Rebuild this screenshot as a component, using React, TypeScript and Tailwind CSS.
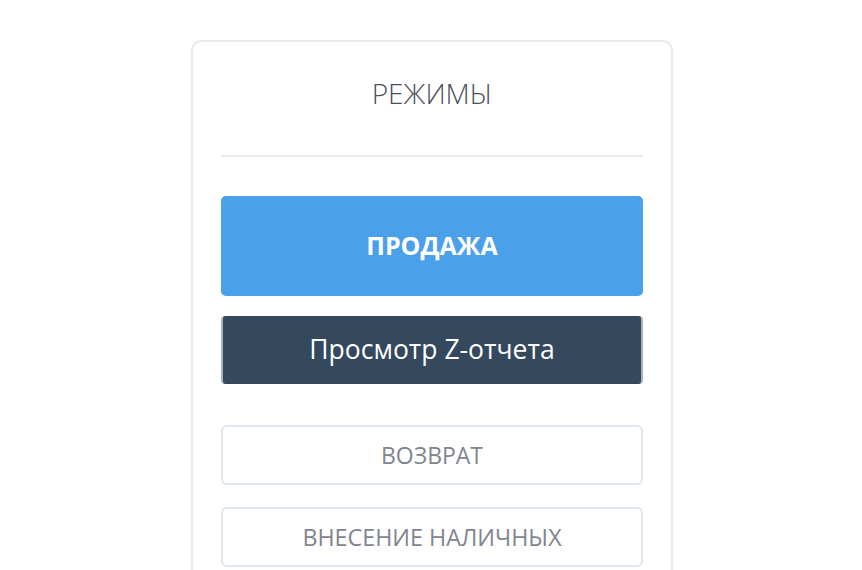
import React from "react";

export default function App() {
  return (
    <div
      className="min-h-[570px] w-full bg-white flex justify-center pl-[2px]"
      style={{ fontFamily: '"Open Sans", "Noto Sans", sans-serif' }}
    >
      <div className="mt-[40px] w-[482px] h-[560px] border-2 border-[#e6e9ed] rounded-[10px] px-[28px]">
        <div className="h-[113px] flex items-center justify-center pb-[12px]">
          <span className="text-[28px] font-light text-[#4a505c]">РЕЖИМЫ</span>
        </div>
        <div className="h-[2px] bg-[#e9ecef]" />
        <div className="mt-[39px] h-[100px] rounded-[5px] bg-[#4aa0e9] flex items-center justify-center">
          <span className="text-[25px] font-bold text-white">ПРОДАЖА</span>
        </div>
        <div className="mt-[20px] h-[68px] rounded-[4px] bg-[#34495e] border-l-2 border-r-2 border-[#aab3bd] flex items-center justify-center">
          <span className="text-[26.5px] text-white">Просмотр Z-отчета</span>
        </div>
        <div className="mt-[41px] h-[60px] rounded-[6px] border-2 border-[#dfe6ee] flex items-center justify-center">
          <span className="text-[23px] text-[#7f8591]">ВОЗВРАТ</span>
        </div>
        <div className="mt-[22px] h-[60px] rounded-[6px] border-2 border-[#dfe6ee] flex items-center justify-center">
          <span className="text-[23.3px] text-[#7f8591]">ВНЕСЕНИЕ НАЛИЧНЫХ</span>
        </div>
      </div>
    </div>
  );
}
